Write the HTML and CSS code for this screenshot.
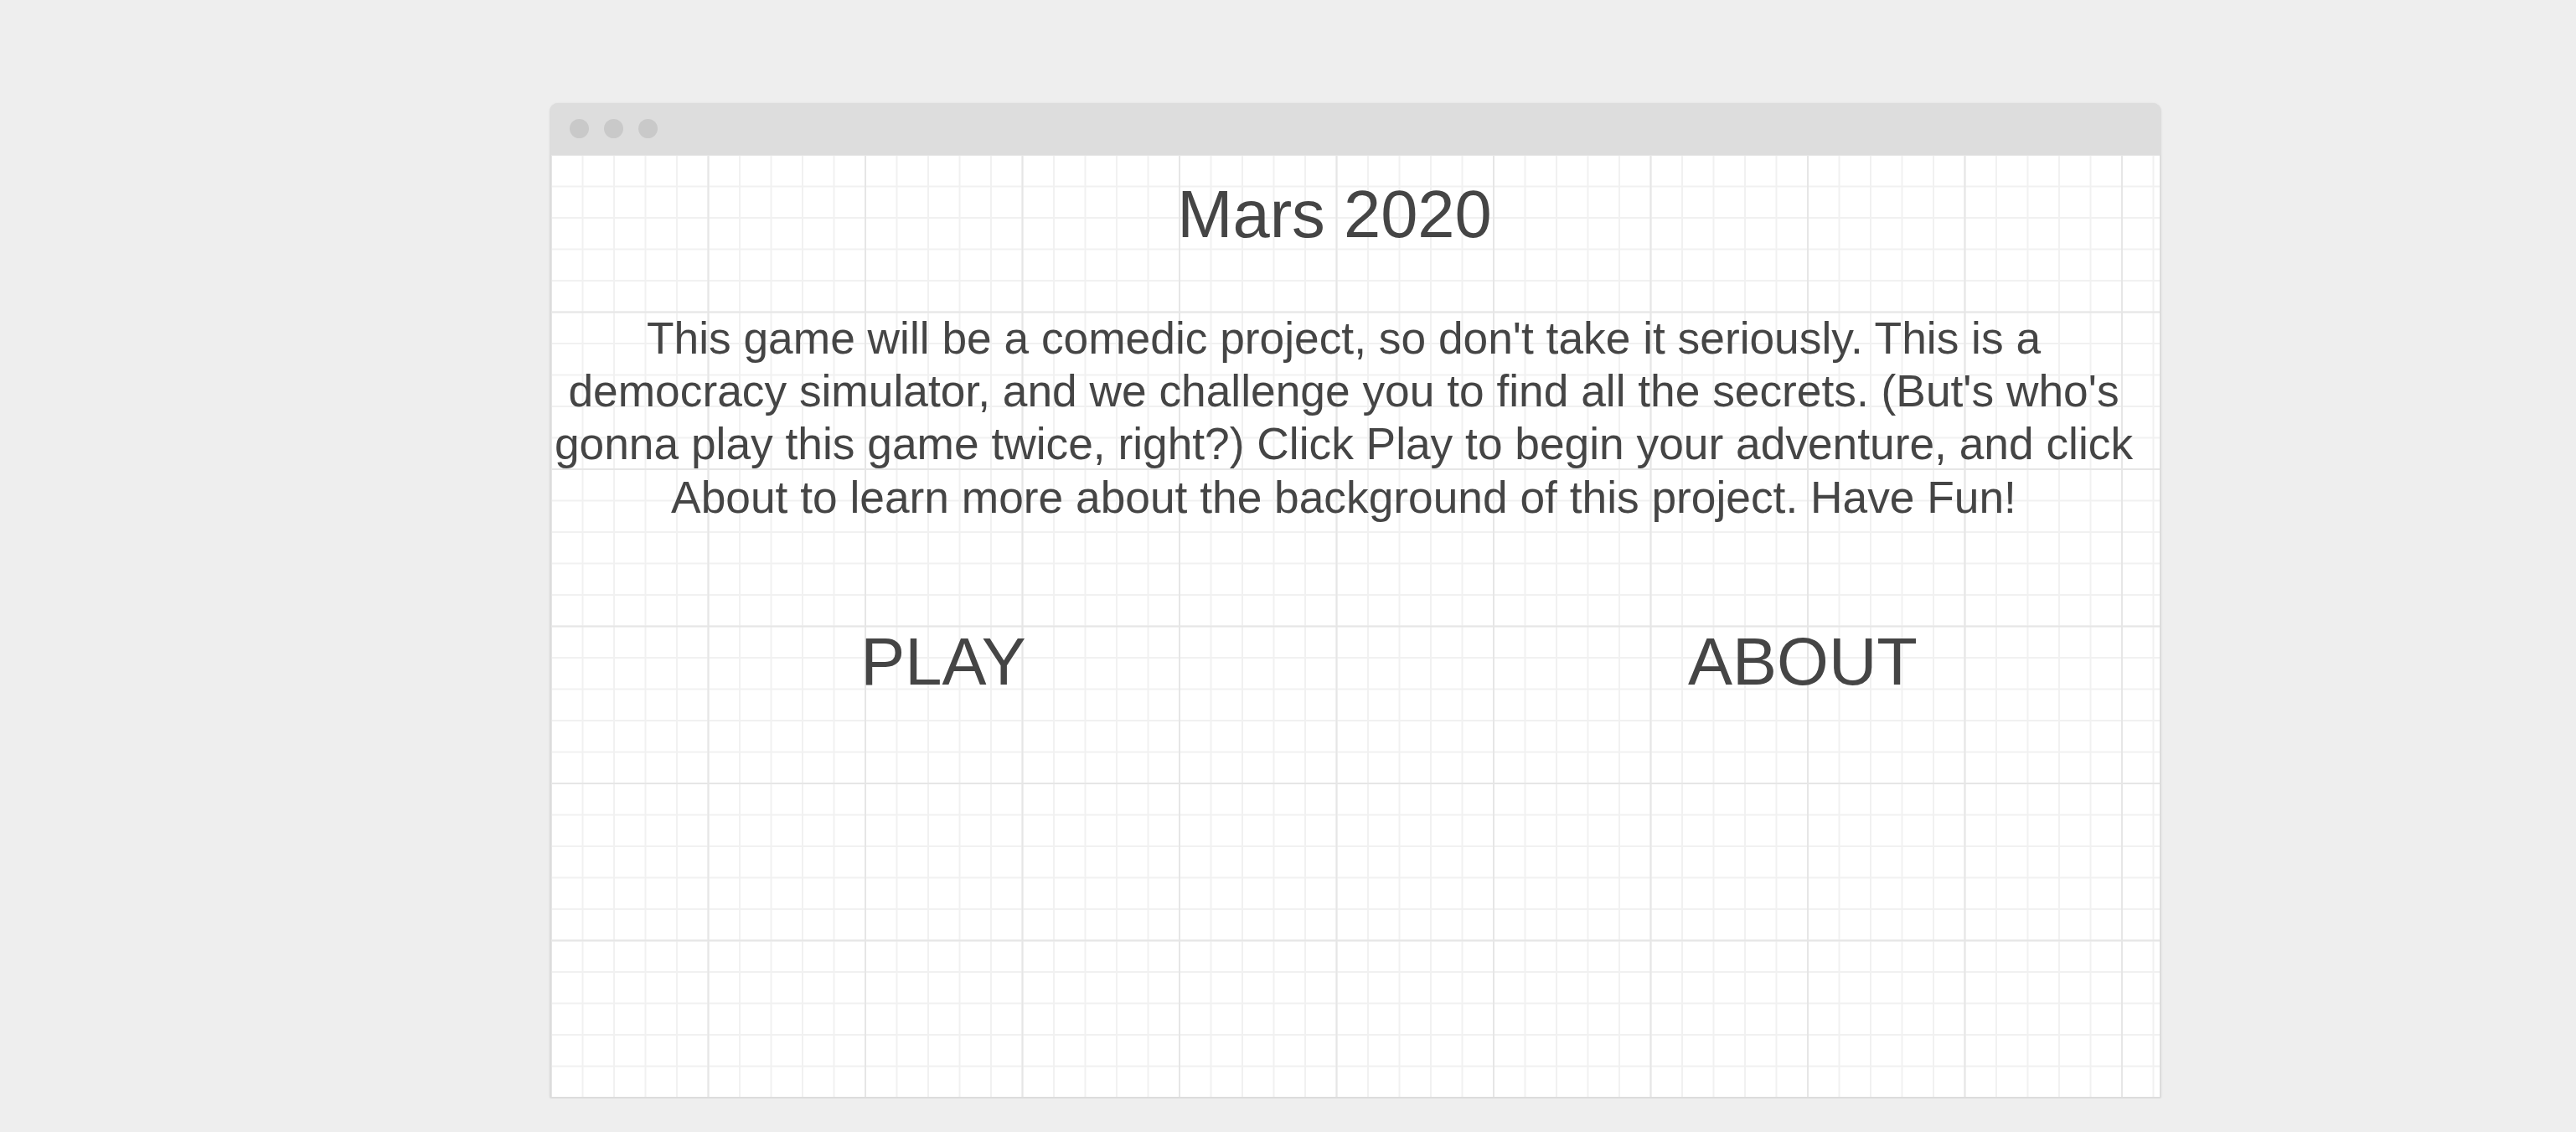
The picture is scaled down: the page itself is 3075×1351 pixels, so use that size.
FILE: index.html
```html
<!DOCTYPE html>
<html lang="en">
<head>
<meta charset="utf-8">
<title>Mars 2020</title>
<link rel="stylesheet" href="styles.css">
</head>
<body>
<div class="window">
  <div class="titlebar">
    <span class="dot"></span>
    <span class="dot"></span>
    <span class="dot"></span>
  </div>
  <div class="content">
    <h1 class="title">Mars 2020</h1>
    <p class="intro">This game will be a comedic project, so don't take it seriously. This is a democracy simulator, and we challenge you to find all the secrets. (But's who's gonna play this game twice, right?) Click Play to begin your adventure, and click About to learn more about the background of this project. Have Fun!</p>
    <div class="actions">
      <div class="action">PLAY</div>
      <div class="action">ABOUT</div>
    </div>
  </div>
</div>
</body>
</html>
```

FILE: styles.css
```css
html, body {
  margin: 0;
  padding: 0;
}
body {
  background: #eeeeee;
  font-family: "Liberation Sans", Arial, sans-serif;
  color: #454545;
  padding-top: 123px;
  padding-left: 656px;
}
.window {
  width: 1924px;
  height: 1188px;
  box-sizing: border-box;
  display: flex;
  flex-direction: column;
  border-radius: 10px 10px 2px 2px;
  box-shadow: 0 0 3px rgba(0, 0, 0, 0.06);
  background: #dcdcdc;
}
.titlebar {
  height: 62px;
  flex: none;
  background: #dddddd;
  border-radius: 10px 10px 0 0;
  display: flex;
  align-items: center;
  gap: 18px;
  padding-left: 24px;
  padding-bottom: 2px;
  box-sizing: border-box;
}
.dot {
  width: 23px;
  height: 23px;
  border-radius: 50%;
  background: #c9c9c9;
}
.content {
  flex: 1;
  margin: 0 2px 2px 2px;
  padding-right: 28px;
  background-color: #ffffff;
  background-image:
    linear-gradient(to right, #e6e6e6 0, #e6e6e6 2px, transparent 2px),
    linear-gradient(to bottom, #e6e6e6 0, #e6e6e6 2px, transparent 2px),
    linear-gradient(to right, #f1f1f1 0, #f1f1f1 2px, transparent 2px),
    linear-gradient(to bottom, #f1f1f1 0, #f1f1f1 2px, transparent 2px);
  background-size: 187.5px 187.5px, 187.5px 187.5px, 37.5px 37.5px, 37.5px 37.5px;
  background-position: 186.5px 186.5px, 186.5px 186.5px, 36.5px 36.5px, 36.5px 36.5px;
}
.title {
  margin: 26px 0 0 0;
  padding-right: 22px;
  font-size: 79.5px;
  font-weight: normal;
  line-height: 90px;
  text-align: center;
}
.intro {
  margin: 71px 0 0 0;
  font-size: 53.3px;
  line-height: 63.2px;
  text-align: center;
}
.actions {
  margin-top: 120px;
  display: grid;
  grid-template-columns: 800px 800px;
  column-gap: 226px;
  padding-left: 68px;
}
.action {
  font-size: 79.5px;
  line-height: 90px;
  text-align: center;
}
```
